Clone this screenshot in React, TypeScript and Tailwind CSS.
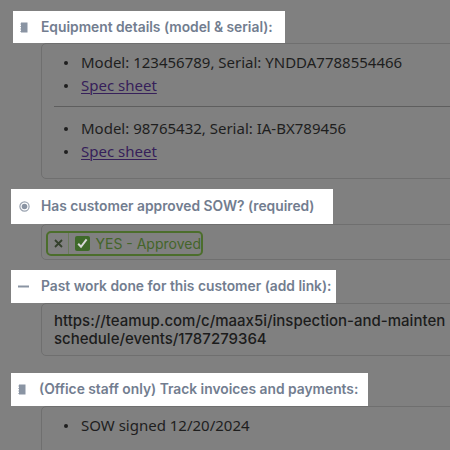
import React from "react";

const labelCls =
  "flex items-center bg-white text-[13.8px] font-semibold text-[#727d8f] whitespace-nowrap";

const NoteIcon = () => (
  <svg width="8" height="11" viewBox="0 0 8 11" className="shrink-0">
    <rect x="1" y="0.5" width="6.5" height="10" fill="#8a94a3" />
    <path d="M1 2h-1M1 4.5h-1M1 7h-1M1 9.5h-1" stroke="#b9c0ca" strokeWidth="1" />
  </svg>
);

const RadioIcon = () => (
  <svg width="11" height="11" viewBox="0 0 11 11" className="shrink-0">
    <circle cx="5.5" cy="5.5" r="4.6" fill="none" stroke="#9aa3b0" strokeWidth="1.2" />
    <circle cx="5.5" cy="5.5" r="2.8" fill="#8a94a3" />
  </svg>
);

const DashIcon = () => (
  <svg width="11" height="11" viewBox="0 0 11 11" className="shrink-0">
    <path d="M0 5.5h11" stroke="#8a94a3" strokeWidth="2" />
  </svg>
);

const CrossIcon = () => (
  <svg width="9" height="9" viewBox="0 0 9 9" className="shrink-0">
    <path d="M1 1l7 7M8 1l-7 7" stroke="#34402c" strokeWidth="1.8" />
  </svg>
);

const CheckBox = () => (
  <svg width="15" height="15" viewBox="0 0 15 15" className="shrink-0">
    <rect width="15" height="15" rx="2" fill="#3f6a2a" />
    <path d="M3.2 7.8l2.8 3 5.6-7.4" fill="none" stroke="#d8d8d8" strokeWidth="2" />
  </svg>
);

const Bullet = ({ children }: { children: React.ReactNode }) => (
  <li className="flex items-center whitespace-nowrap">
    <span className="w-[4px] h-[4px] rounded-full bg-[#1e1e1e] ml-[22px] mr-[13px]" />
    {children}
  </li>
);

const SpecLink = () => (
  <a className="underline text-[#36205a] underline-offset-2 decoration-1">Spec sheet</a>
);

const inter = { fontFamily: "Inter, sans-serif" };

export default function App() {
  return (
    <div
      className="w-[450px] h-[450px] overflow-hidden bg-[#808080] text-[#1e1e1e]"
      style={{ fontFamily: '"Noto Sans", "Open Sans", sans-serif' }}
    >
      <div className="pt-[11px]">
        {/* equipment */}
        <div className={`${labelCls} ml-[13px] w-[272px] h-[32px] pl-[7px] gap-[13px]`} style={inter}>
          <NoteIcon />
          <span>Equipment details (model &amp; serial):</span>
        </div>
        <div className="ml-[41px] w-[440px] h-[136px] border border-[#6f6f6f] rounded-[5px] text-[15px]">
          <ul className="pt-[7px] leading-[23px]">
            <Bullet>Model: 123456789, Serial: YNDDA7788554466</Bullet>
            <Bullet>
              <SpecLink />
            </Bullet>
          </ul>
          <div className="ml-[12px] mt-[9px] border-t border-[#5e5e5e]" />
          <ul className="pt-[10px] leading-[23px]">
            <Bullet>Model: 98765432, Serial: IA-BX789456</Bullet>
            <Bullet>
              <SpecLink />
            </Bullet>
          </ul>
        </div>

        {/* SOW */}
        <div className={`${labelCls} mt-[10px] ml-[11px] w-[322px] h-[35px] pl-[8px] gap-[11px]`} style={inter}>
          <RadioIcon />
          <span>Has customer approved SOW? (required)</span>
        </div>
        <div className="ml-[41px] w-[440px] h-[36px] border border-[#6f6f6f] rounded-[5px] pl-[4px] pt-[5px]" style={inter}>
          <div className="inline-flex items-center h-[25px] w-[157px] border-2 border-[#4c6e2c] rounded-[5px] text-[14px] text-[#44652a] whitespace-nowrap">
            <span className="w-[24px] flex justify-center"><CrossIcon /></span>
            <span className="h-full border-l border-[#6a7a5c]" />
            <span className="ml-[6px] mr-[5px]"><CheckBox /></span>
            <span>YES - Approved</span>
          </div>
        </div>

        {/* past work */}
        <div className={`${labelCls} mt-[10px] ml-[11px] w-[325px] h-[33px] pl-[7px] gap-[12px]`} style={inter}>
          <DashIcon />
          <span>Past work done for this customer (add link):</span>
        </div>
        <div className="ml-[41px] w-[440px] h-[53px] border border-[#6f6f6f] rounded-[5px] px-[12px] pt-[8px] text-[15px] font-medium leading-[18px] text-[#1c1c1c] overflow-hidden" style={inter}>
          <div className="whitespace-nowrap">https://teamup.com/c/maax5i/inspection-and-mainten</div>
          <div>schedule/events/1787279364</div>
        </div>

        {/* invoices */}
        <div className={`${labelCls} mt-[17px] ml-[11px] w-[357px] h-[33px] pl-[7px] gap-[13px]`} style={inter}>
          <NoteIcon />
          <span>(Office staff only) Track invoices and payments:</span>
        </div>
        <div className="ml-[41px] w-[440px] h-[80px] border border-[#6f6f6f] rounded-[5px] text-[15px]">
          <ul className="pt-[7px] leading-[23px]">
            <Bullet>SOW signed 12/20/2024</Bullet>
          </ul>
        </div>
      </div>
    </div>
  );
}
